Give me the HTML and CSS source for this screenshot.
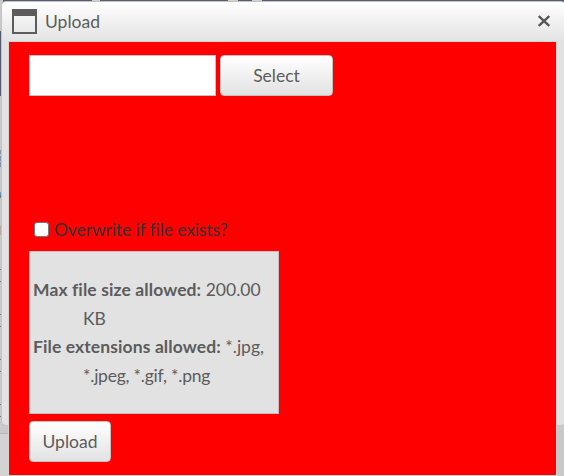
FILE: index.html
```html
<!DOCTYPE html>
<html lang="en">
<head>
<meta charset="utf-8">
<title>Upload</title>
<link rel="stylesheet" href="styles.css">
</head>
<body>
<div class="page-edge">
<svg width="564" height="476" aria-hidden="true">
<path fill="#c9c9c9" d="M0 0h564v476H0z"/>
<path fill="#d3d3d3" d="M0 433h9v43H0z"/>
<path fill="#565c73" d="M3 0h561v3H3zM0 31h2v65H0z"/>
<path fill="#cfcfcf" d="M92 0h8v2h-8zM228 0h10v2h-10zM252 0h10v2h-10z"/>
<path fill="#8795b5" d="M0 150h1v4H0zM0 156h1v5H0zM0 162h1v5H0z"/>
<path fill="#bda4a4" d="M0 226h1v9H0z"/>
<path fill="#659bc5" d="M0 192h1v3H0z"/>
<path fill="#777" d="M0 195h1v3H0zM0 269h2v1H0zM0 281h2v1H0zM0 314h2v1H0zM0 326h2v1H0zM0 359h2v1H0zM0 371h2v1H0zM0 404h2v1H0zM0 416h2v1H0z"/>
<path fill="#b8b8b8" d="M0 433h9v1H0z"/>
</svg>
</div>
<main class="dialog">
<header class="titlebar">
<svg class="window-icon" width="25" height="25" viewBox="0 0 25 25" aria-hidden="true"><path fill="#5c5c5c" fill-rule="evenodd" d="M0 0h25v25H0zM2 7v16h21V7z"/></svg>
<h1 class="title">Upload</h1>
<svg class="close" width="12" height="12" viewBox="0 0 12 12" aria-hidden="true"><path d="M.7 1l10.6 10M11.3 1L.7 11" stroke="#555" stroke-width="2.4"/></svg>
</header>
<section class="content">
<div class="picker"><input class="file-name" type="text" aria-label="File"><button class="button select">Select</button></div>
<label class="overwrite"><input class="check" type="checkbox"><span class="overwrite-text">Overwrite if file exists?</span></label>
<div class="limits">
<p class="rule"><b class="rule-name">Max file size allowed:</b> 200.00<br>KB</p>
<p class="rule"><b class="rule-name">File extensions allowed:</b> *.jpg,<br><span class="extensions">*.jpeg, *.gif, *.png</span></p>
</div>
<button class="button upload">Upload</button>
</section>
</main>
</body>
</html>
```
FILE: styles.css
```css
* { box-sizing: border-box; }
body {
  margin: 0;
  width: 564px;
  height: 476px;
  overflow: hidden;
  font: 17.5px/28.5px Lato, "Open Sans", sans-serif;
  font-variant-ligatures: none;
  color: #5c5c5c;
}
.page-edge { position: absolute; inset: 0; z-index: -1; }
.page-edge svg { display: block; }
.dialog {
  width: 565px;
  height: 425px;
  margin: 1px 0 0 1px;
  padding: 0 7px;
  border: 1px solid #c4c4c4;
  border-radius: 5px;
  background: #e2e2e2;
}
.titlebar {
  display: flex;
  align-items: center;
  height: 40px;
  margin: 0 -7px;
  padding: 0 14px 0 10px;
  border-radius: 4px 4px 0 0;
  background: linear-gradient(#fff, #e2e2e2);
}
.window-icon { flex: none; margin-top: -1px; }
.title { flex: 1; margin: 0 0 0 8px; font: inherit; }
.close { margin: -2px 1px 0 0; }
.content {
  display: flex;
  flex-direction: column;
  align-items: flex-start;
  width: 547px;
  height: 433px;
  padding: 13px 20px 0;
  background: #f00;
  box-shadow: 0 0 0 1px #d5d5d5;
}
.picker { display: flex; gap: 4px; height: 41px; }
.file-name {
  width: 187px;
  height: 41px;
  padding: 0 6px;
  border: 1px solid #c4c4c4;
  background: #fff;
}
.button {
  height: 41px;
  padding: 2px 0 0;
  border: 1px solid #c1c1c1;
  border-radius: 4px;
  background: linear-gradient(#fff, #e2e2e2);
  font: inherit;
  color: inherit;
}
.select { width: 113px; }
.overwrite {
  display: flex;
  align-items: center;
  height: 28px;
  margin: 120px 0 7px 5px;
  color: #333;
}
.overwrite-text { letter-spacing: -.12px; }
.check {
  appearance: none;
  width: 15px;
  height: 15px;
  margin: -2px 5px 0 0;
  border: 1px solid #767676;
  border-radius: 3px;
  background: #fff;
}
.limits {
  width: 250px;
  height: 163px;
  padding: 24px 3px 0;
  border: 1px solid #c1c1c1;
  background: #e2e2e2;
}
.rule {
  height: 57px;
  margin: 0;
  padding-left: 50px;
  text-indent: -50px;
  white-space: nowrap;
}
.rule-name { letter-spacing: .1px; }
.extensions { letter-spacing: -.22px; }
.upload { width: 82px; margin-top: 7px; }
```
